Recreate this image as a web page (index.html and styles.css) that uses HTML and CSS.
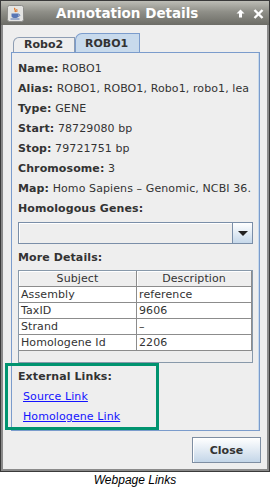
FILE: index.html
```html
<!DOCTYPE html>
<html lang="en">
<head>
    <meta charset="UTF-8">
    <meta name="viewport" content="width=device-width, initial-scale=1.0">
    <title>Annotation Details</title>
    <link rel="stylesheet" href="styles.css">
</head>
<body>
    <div class="window">
        <div class="titlebar">
            <!-- Java cup icon -->
            <svg class="app-icon" width="17" height="17" viewBox="0 0 17 17">
                <rect x="0.5" y="0.5" width="16" height="16" rx="2" fill="#e4e4e2" stroke="#8d8d8a"/>
                <path d="M8 3 C6.5 4.5 9.5 5 8 7" fill="none" stroke="#e06a10" stroke-width="1.2"/>
                <path d="M10 4 C9.2 5 10.6 5.6 9.6 7" fill="none" stroke="#e06a10" stroke-width="1"/>
                <path d="M4.5 8.5 H11.5 V11 C11.5 12.5 10 13 8 13 C6 13 4.5 12.5 4.5 11 Z" fill="#5876b5"/>
                <path d="M11.5 9.2 C13.2 9.2 13.2 11.4 11.3 11.4" fill="none" stroke="#5876b5" stroke-width="1"/>
                <path d="M3.5 14 H12.5" stroke="#5876b5" stroke-width="1"/>
            </svg>
            <span class="title">Annotation Details</span>
            <span class="controls">
                <svg width="9" height="9" viewBox="0 0 9 9">
                    <path d="M4.5 0.5 L8.5 4.5 H6 V8.5 H3 V4.5 H0.5 Z" fill="#fff"/>
                </svg>
                <svg width="11" height="10" viewBox="0 0 11 10">
                    <path d="M1.5 1 L9.5 9 M9.5 1 L1.5 9" stroke="#fff" stroke-width="2.4"/>
                </svg>
            </span>
        </div>
        <div class="frame">
            <div class="tabs">
                <div class="tab">Robo2</div>
                <div class="tab active">ROBO1</div>
            </div>
            <div class="panel">
                <div class="field"><b>Name:</b> ROBO1</div>
                <div class="field"><b>Alias:</b> ROBO1, ROBO1, Robo1, robo1, lea</div>
                <div class="field"><b>Type:</b> GENE</div>
                <div class="field"><b>Start:</b> 78729080 bp</div>
                <div class="field"><b>Stop:</b> 79721751 bp</div>
                <div class="field"><b>Chromosome:</b> 3</div>
                <div class="field"><b>Map:</b> Homo Sapiens &ndash; Genomic, NCBI 36.</div>
                <div class="field"><b>Homologous Genes:</b></div>
                <div class="combo">
                    <div class="combo-field"></div>
                    <div class="combo-btn"><span class="arrow"></span></div>
                </div>
                <div class="field gap"><b>More Details:</b></div>
                <div class="table-wrap">
                    <table class="details">
                        <thead>
                            <tr><th class="col-subject">Subject</th><th class="col-desc">Description</th></tr>
                        </thead>
                        <tbody>
                            <tr><td>Assembly</td><td>reference</td></tr>
                            <tr><td>TaxID</td><td>9606</td></tr>
                            <tr><td>Strand</td><td>&ndash;</td></tr>
                            <tr><td>Homologene Id</td><td>2206</td></tr>
                        </tbody>
                    </table>
                </div>
                <div class="field gap"><b>External Links:</b></div>
                <div class="link-row"><a class="link" href="#">Source Link</a></div>
                <div class="link-row"><a class="link" href="#">Homologene Link</a></div>
            </div>
            <div class="buttons">
                <button class="close-btn">Close</button>
            </div>
        </div>
        <!-- green callout drawn over the links section -->
        <div class="highlight"></div>
    </div>
    <p class="caption">Webpage Links</p>
</body>
</html>
```

FILE: styles.css
```css
body {
    margin: 0;
    background: #fff;
    font-family: "DejaVu Sans", "Noto Sans", sans-serif;
    font-size: 11px;
    color: #333;
}
.window {
    position: relative;
    width: 270px;
    height: 472px;
    box-sizing: border-box;
    border: 1px solid #3a3a3a;
    display: flex;
    flex-direction: column;
    background: #eeeeee;
}
.titlebar {
    height: 24px;
    flex: none;
    display: flex;
    align-items: center;
    padding: 0 5px 0 6px;
    background: linear-gradient(#bdbdb6 0%, #8f8f88 45%, #6c6c66 100%);
}
.app-icon {
    flex: none;
}
.title {
    margin-left: 32px;
    color: #fff;
    font-size: 13.5px;
    font-weight: bold;
    white-space: nowrap;
}
.controls {
    margin-left: auto;
    display: flex;
    align-items: center;
    gap: 8px;
    padding-top: 1px;
}
.frame {
    flex: 1;
    display: flex;
    flex-direction: column;
    border: 2px solid #8a8a8a;
    border-top: none;
}
.tabs {
    display: flex;
    align-items: flex-end;
    height: 19px;
    margin: 8px 0 0 10px;
}
.tab {
    box-sizing: border-box;
    height: 15px;
    width: 62px;
    padding-left: 10px;
    border: 1px solid #8d9db3;
    border-bottom: none;
    border-top-left-radius: 6px;
    font-weight: bold;
    line-height: 14px;
    background: #eeeeee;
}
.tab.active {
    height: 19px;
    width: 65px;
    padding-left: 9px;
    line-height: 19px;
    background: #c8daec;
    border-color: #7b9ccc;
    border-top-left-radius: 7px;
}
.panel {
    width: 249px;
    height: 379px;
    box-sizing: border-box;
    margin-left: 8px;
    padding: 6px 5px 3px 6px;
    border: 1px solid #7b9ccc;
    box-shadow: inset -1px 0 0 #c8daec;
    overflow: hidden;
    letter-spacing: 0.1px;
}
.field {
    height: 20px;
    line-height: 20px;
    white-space: nowrap;
}
.field b {
    font-weight: bold;
}
.field.gap {
    margin-top: 4px;
}
.combo {
    display: flex;
    width: 235px;
    height: 22px;
    margin-top: 3px;
}
.combo-field {
    flex: 1;
    border: 1px solid #7a8ea8;
    border-right: none;
    box-shadow: inset 1px 1px 0 #fff;
}
.combo-btn {
    width: 19px;
    border: 1px solid #7a8ea8;
    background: linear-gradient(#ffffff, #c6d8ea);
    display: flex;
    align-items: center;
    justify-content: center;
}
.arrow {
    width: 0;
    height: 0;
    border-left: 5px solid transparent;
    border-right: 5px solid transparent;
    border-top: 5px solid #222;
}
.table-wrap {
    width: 235px;
    height: 93px;
    box-sizing: border-box;
    margin-top: 2px;
    border: 1px solid #8899aa;
    background: #eeeeee;
}
.details {
    border-collapse: separate;
    border-spacing: 0;
    table-layout: fixed;
    width: 233px;
}
.col-subject {
    width: 118px;
}
.col-desc {
    width: 115px;
}
.details th,
.details td {
    box-sizing: border-box;
    height: 16px;
    padding: 0 2px;
    line-height: 15px;
    font-weight: normal;
    white-space: nowrap;
    overflow: hidden;
    border-right: 1px solid #8c8c8c;
    border-bottom: 1px solid #8c8c8c;
}
.details th {
    height: 16px;
    text-align: center;
    background: #eeeeee;
    box-shadow: inset 1px 1px 0 #fff;
}
.details td {
    text-align: left;
    background: #fff;
}
.link-row {
    height: 20px;
    line-height: 20px;
    padding-left: 5px;
}
.link {
    color: #1414ff;
    text-decoration: underline;
}
.buttons {
    display: flex;
    justify-content: flex-end;
    padding: 6px 6px 0 0;
}
.close-btn {
    width: 69px;
    height: 26px;
    margin: 0;
    padding: 0;
    border: 1px solid #7e8ea2;
    border-radius: 0;
    background: linear-gradient(#ffffff, #c4d6e8);
    box-shadow: inset 1px 1px 0 #fff;
    font-family: "DejaVu Sans", sans-serif;
    font-size: 11px;
    font-weight: bold;
    color: #333;
}
.highlight {
    position: absolute;
    left: 4px;
    top: 362px;
    width: 154px;
    height: 67px;
    box-sizing: border-box;
    border: 3px solid #00936f;
    pointer-events: none;
}
.caption {
    margin: 1px 0 0;
    width: 270px;
    text-align: center;
    font-family: "Liberation Sans", Arial, sans-serif;
    font-style: italic;
    font-size: 12px;
    line-height: 14px;
    color: #000;
}
```
